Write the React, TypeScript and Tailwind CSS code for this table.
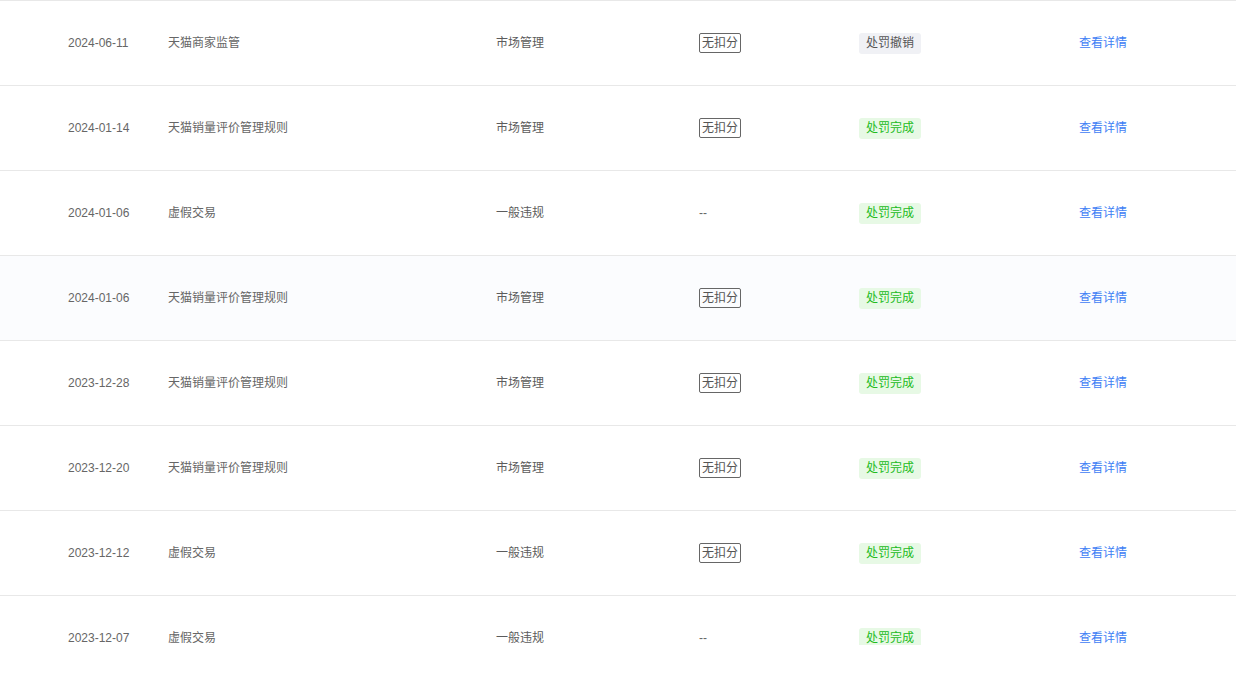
import React from 'react';

type Row = {
  date: string;
  rule: string;
  type: string;
  deduct: boolean;
  status: 'revoked' | 'done';
};

const rows: Row[] = [
  { date: '2024-06-11', rule: '天猫商家监管', type: '市场管理', deduct: true, status: 'revoked' },
  { date: '2024-01-14', rule: '天猫销量评价管理规则', type: '市场管理', deduct: true, status: 'done' },
  { date: '2024-01-06', rule: '虚假交易', type: '一般违规', deduct: false, status: 'done' },
  { date: '2024-01-06', rule: '天猫销量评价管理规则', type: '市场管理', deduct: true, status: 'done' },
  { date: '2023-12-28', rule: '天猫销量评价管理规则', type: '市场管理', deduct: true, status: 'done' },
  { date: '2023-12-20', rule: '天猫销量评价管理规则', type: '市场管理', deduct: true, status: 'done' },
  { date: '2023-12-12', rule: '虚假交易', type: '一般违规', deduct: true, status: 'done' },
  { date: '2023-12-07', rule: '虚假交易', type: '一般违规', deduct: false, status: 'done' },
];

const App: React.FC = () => {
  return (
    <div
      className="bg-white h-[645px] overflow-hidden text-[12px]"
      style={{ fontFamily: '"Liberation Sans", Arial, "Noto Sans CJK SC", sans-serif' }}
    >
      <div className="w-[1236px]">
        {rows.map((row, i) => (
          <div
            key={i}
            className={`flex items-center h-[85px] border-t border-[#e8e8e8] pl-[68px] ${i === 3 ? 'bg-[#fbfcfe]' : 'bg-white'}`}
          >
            <div className="w-[100px] text-[#666]">{row.date}</div>
            <div className="w-[328px] text-[#666]">{row.rule}</div>
            <div className="w-[203px] text-[#5c5c5c]">{row.type}</div>
            <div className="w-[160px] text-[#666]">
              {row.deduct ? (
                <span className="inline-flex items-center h-[20px] px-[2px] border border-[#666] rounded-[2px] text-[#555] leading-none">
                  无扣分
                </span>
              ) : (
                <span>--</span>
              )}
            </div>
            <div className="w-[220px]">
              {row.status === 'revoked' ? (
                <span className="inline-flex items-center h-[21px] px-[7px] rounded-[3px] bg-[#f0f1f5] text-[#555]">
                  处罚撤销
                </span>
              ) : (
                <span className="inline-flex items-center h-[21px] px-[7px] rounded-[3px] bg-[#e7f9e5] text-[#22bb22]">
                  处罚完成
                </span>
              )}
            </div>
            <div>
              <a className="text-[#4080f5] cursor-pointer">查看详情</a>
            </div>
          </div>
        ))}
      </div>
    </div>
  );
};

export default App;
